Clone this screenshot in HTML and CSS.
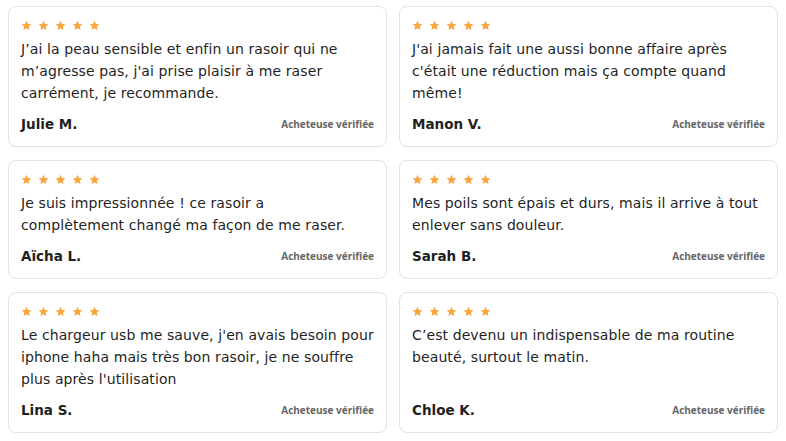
FILE: index.html
```html
<!DOCTYPE html>
<html lang="fr">
<head>
    <meta charset="UTF-8">
    <meta name="viewport" content="width=device-width, initial-scale=1.0">
    <title>Avis clientes</title>
    <link rel="stylesheet" href="styles.css">
</head>
<body>
    <div class="reviews">
        <div class="review">
            <div class="stars">
                <svg viewBox="0 0 24 24"><path d="M12 1.5l3.1 7.1 7.7.7-5.8 5.1 1.7 7.6L12 18l-6.7 4 1.7-7.6-5.8-5.1 7.7-.7z"/></svg>
                <svg viewBox="0 0 24 24"><path d="M12 1.5l3.1 7.1 7.7.7-5.8 5.1 1.7 7.6L12 18l-6.7 4 1.7-7.6-5.8-5.1 7.7-.7z"/></svg>
                <svg viewBox="0 0 24 24"><path d="M12 1.5l3.1 7.1 7.7.7-5.8 5.1 1.7 7.6L12 18l-6.7 4 1.7-7.6-5.8-5.1 7.7-.7z"/></svg>
                <svg viewBox="0 0 24 24"><path d="M12 1.5l3.1 7.1 7.7.7-5.8 5.1 1.7 7.6L12 18l-6.7 4 1.7-7.6-5.8-5.1 7.7-.7z"/></svg>
                <svg viewBox="0 0 24 24"><path d="M12 1.5l3.1 7.1 7.7.7-5.8 5.1 1.7 7.6L12 18l-6.7 4 1.7-7.6-5.8-5.1 7.7-.7z"/></svg>
            </div>
            <p class="text">J’ai la peau sensible et enfin un rasoir qui ne m’agresse pas, j'ai prise plaisir à me raser carrément, je recommande.</p>
            <div class="footer">
                <span class="name">Julie M.</span>
                <span class="verified">Acheteuse vérifiée</span>
            </div>
        </div>
        <div class="review">
            <div class="stars">
                <svg viewBox="0 0 24 24"><path d="M12 1.5l3.1 7.1 7.7.7-5.8 5.1 1.7 7.6L12 18l-6.7 4 1.7-7.6-5.8-5.1 7.7-.7z"/></svg>
                <svg viewBox="0 0 24 24"><path d="M12 1.5l3.1 7.1 7.7.7-5.8 5.1 1.7 7.6L12 18l-6.7 4 1.7-7.6-5.8-5.1 7.7-.7z"/></svg>
                <svg viewBox="0 0 24 24"><path d="M12 1.5l3.1 7.1 7.7.7-5.8 5.1 1.7 7.6L12 18l-6.7 4 1.7-7.6-5.8-5.1 7.7-.7z"/></svg>
                <svg viewBox="0 0 24 24"><path d="M12 1.5l3.1 7.1 7.7.7-5.8 5.1 1.7 7.6L12 18l-6.7 4 1.7-7.6-5.8-5.1 7.7-.7z"/></svg>
                <svg viewBox="0 0 24 24"><path d="M12 1.5l3.1 7.1 7.7.7-5.8 5.1 1.7 7.6L12 18l-6.7 4 1.7-7.6-5.8-5.1 7.7-.7z"/></svg>
            </div>
            <p class="text">J'ai jamais fait une aussi bonne affaire après c'était une réduction mais ça compte quand même!</p>
            <div class="footer">
                <span class="name">Manon V.</span>
                <span class="verified">Acheteuse vérifiée</span>
            </div>
        </div>
        <div class="review">
            <div class="stars">
                <svg viewBox="0 0 24 24"><path d="M12 1.5l3.1 7.1 7.7.7-5.8 5.1 1.7 7.6L12 18l-6.7 4 1.7-7.6-5.8-5.1 7.7-.7z"/></svg>
                <svg viewBox="0 0 24 24"><path d="M12 1.5l3.1 7.1 7.7.7-5.8 5.1 1.7 7.6L12 18l-6.7 4 1.7-7.6-5.8-5.1 7.7-.7z"/></svg>
                <svg viewBox="0 0 24 24"><path d="M12 1.5l3.1 7.1 7.7.7-5.8 5.1 1.7 7.6L12 18l-6.7 4 1.7-7.6-5.8-5.1 7.7-.7z"/></svg>
                <svg viewBox="0 0 24 24"><path d="M12 1.5l3.1 7.1 7.7.7-5.8 5.1 1.7 7.6L12 18l-6.7 4 1.7-7.6-5.8-5.1 7.7-.7z"/></svg>
                <svg viewBox="0 0 24 24"><path d="M12 1.5l3.1 7.1 7.7.7-5.8 5.1 1.7 7.6L12 18l-6.7 4 1.7-7.6-5.8-5.1 7.7-.7z"/></svg>
            </div>
            <p class="text">Je suis impressionnée ! ce rasoir a<br>complètement changé ma façon de me raser.</p>
            <div class="footer">
                <span class="name">Aïcha L.</span>
                <span class="verified">Acheteuse vérifiée</span>
            </div>
        </div>
        <div class="review">
            <div class="stars">
                <svg viewBox="0 0 24 24"><path d="M12 1.5l3.1 7.1 7.7.7-5.8 5.1 1.7 7.6L12 18l-6.7 4 1.7-7.6-5.8-5.1 7.7-.7z"/></svg>
                <svg viewBox="0 0 24 24"><path d="M12 1.5l3.1 7.1 7.7.7-5.8 5.1 1.7 7.6L12 18l-6.7 4 1.7-7.6-5.8-5.1 7.7-.7z"/></svg>
                <svg viewBox="0 0 24 24"><path d="M12 1.5l3.1 7.1 7.7.7-5.8 5.1 1.7 7.6L12 18l-6.7 4 1.7-7.6-5.8-5.1 7.7-.7z"/></svg>
                <svg viewBox="0 0 24 24"><path d="M12 1.5l3.1 7.1 7.7.7-5.8 5.1 1.7 7.6L12 18l-6.7 4 1.7-7.6-5.8-5.1 7.7-.7z"/></svg>
                <svg viewBox="0 0 24 24"><path d="M12 1.5l3.1 7.1 7.7.7-5.8 5.1 1.7 7.6L12 18l-6.7 4 1.7-7.6-5.8-5.1 7.7-.7z"/></svg>
            </div>
            <p class="text">Mes poils sont épais et durs, mais il arrive à tout enlever sans douleur.</p>
            <div class="footer">
                <span class="name">Sarah B.</span>
                <span class="verified">Acheteuse vérifiée</span>
            </div>
        </div>
        <div class="review">
            <div class="stars">
                <svg viewBox="0 0 24 24"><path d="M12 1.5l3.1 7.1 7.7.7-5.8 5.1 1.7 7.6L12 18l-6.7 4 1.7-7.6-5.8-5.1 7.7-.7z"/></svg>
                <svg viewBox="0 0 24 24"><path d="M12 1.5l3.1 7.1 7.7.7-5.8 5.1 1.7 7.6L12 18l-6.7 4 1.7-7.6-5.8-5.1 7.7-.7z"/></svg>
                <svg viewBox="0 0 24 24"><path d="M12 1.5l3.1 7.1 7.7.7-5.8 5.1 1.7 7.6L12 18l-6.7 4 1.7-7.6-5.8-5.1 7.7-.7z"/></svg>
                <svg viewBox="0 0 24 24"><path d="M12 1.5l3.1 7.1 7.7.7-5.8 5.1 1.7 7.6L12 18l-6.7 4 1.7-7.6-5.8-5.1 7.7-.7z"/></svg>
                <svg viewBox="0 0 24 24"><path d="M12 1.5l3.1 7.1 7.7.7-5.8 5.1 1.7 7.6L12 18l-6.7 4 1.7-7.6-5.8-5.1 7.7-.7z"/></svg>
            </div>
            <p class="text">Le chargeur usb me sauve, j'en avais besoin pour iphone haha mais très bon rasoir, je ne souffre plus après l'utilisation</p>
            <div class="footer">
                <span class="name">Lina S.</span>
                <span class="verified">Acheteuse vérifiée</span>
            </div>
        </div>
        <div class="review">
            <div class="stars">
                <svg viewBox="0 0 24 24"><path d="M12 1.5l3.1 7.1 7.7.7-5.8 5.1 1.7 7.6L12 18l-6.7 4 1.7-7.6-5.8-5.1 7.7-.7z"/></svg>
                <svg viewBox="0 0 24 24"><path d="M12 1.5l3.1 7.1 7.7.7-5.8 5.1 1.7 7.6L12 18l-6.7 4 1.7-7.6-5.8-5.1 7.7-.7z"/></svg>
                <svg viewBox="0 0 24 24"><path d="M12 1.5l3.1 7.1 7.7.7-5.8 5.1 1.7 7.6L12 18l-6.7 4 1.7-7.6-5.8-5.1 7.7-.7z"/></svg>
                <svg viewBox="0 0 24 24"><path d="M12 1.5l3.1 7.1 7.7.7-5.8 5.1 1.7 7.6L12 18l-6.7 4 1.7-7.6-5.8-5.1 7.7-.7z"/></svg>
                <svg viewBox="0 0 24 24"><path d="M12 1.5l3.1 7.1 7.7.7-5.8 5.1 1.7 7.6L12 18l-6.7 4 1.7-7.6-5.8-5.1 7.7-.7z"/></svg>
            </div>
            <p class="text">C’est devenu un indispensable de ma routine beauté, surtout le matin.</p>
            <div class="footer">
                <span class="name">Chloe K.</span>
                <span class="verified">Acheteuse vérifiée</span>
            </div>
        </div>
    </div>
</body>
</html>
```

FILE: styles.css
```css
body {
    margin: 0;
    padding: 6px 8px;
    background-color: #ffffff;
    font-family: "DejaVu Sans", Arial, sans-serif;
    color: #1f1f1f;
}
.reviews {
    display: grid;
    grid-template-columns: 1fr 1fr;
    column-gap: 12px;
    row-gap: 13px;
}
.review {
    display: flex;
    flex-direction: column;
    border: 1px solid #e2e2e2;
    border-radius: 8px;
    padding: 12px;
}
.stars {
    display: flex;
    gap: 6px;
    height: 12px;
    align-items: center;
}
.stars svg {
    width: 11px;
    height: 11px;
    fill: #fba53d;
}
.text {
    margin: 7px 0 0 0;
    font-size: 14px;
    line-height: 22px;
    letter-spacing: 0.1px;
}
.footer {
    display: flex;
    justify-content: space-between;
    align-items: center;
    margin-top: auto;
    padding-top: 10px;
    height: 20px;
}
.name {
    font-weight: 700;
    font-size: 13.5px;
}
.verified {
    font-family: "Open Sans", Arial, sans-serif;
    font-weight: 700;
    font-size: 10px;
    color: #666666;
}
```
